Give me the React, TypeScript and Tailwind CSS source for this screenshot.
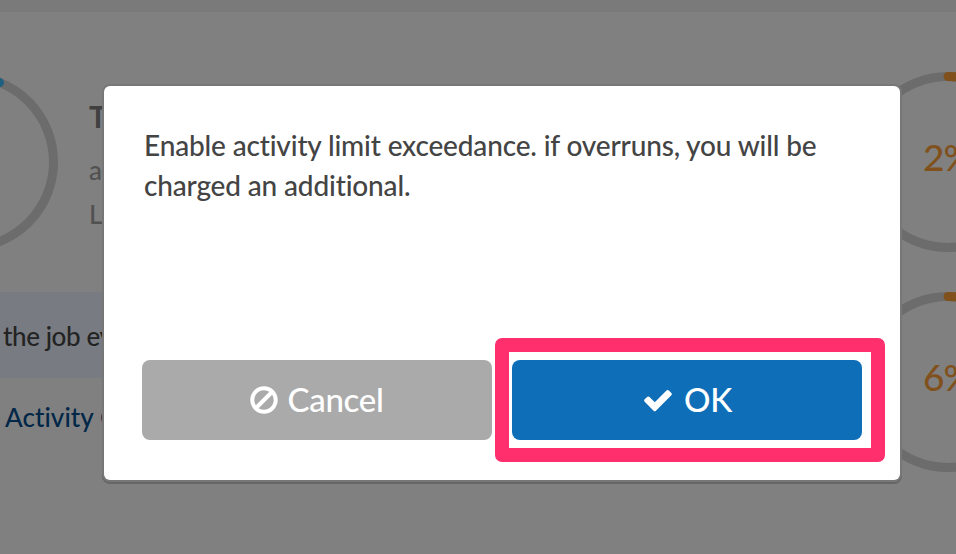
import React from "react";

function Gauge({ color, arc, label }: { color: string; arc: string; label?: string }) {
  return (
    <div className="relative size-[180px] shrink-0">
      <svg className="block size-full" viewBox="0 0 180 180" fill="none" strokeWidth="9">
        <circle cx="90" cy="90" r="85.5" stroke="#6c6c6c" />
        <path d={arc} stroke={color} strokeLinecap="round" />
      </svg>
      {label && (
        <span className="absolute inset-0 flex items-center pb-3 pl-[65px] text-[37px] leading-none font-medium tracking-[-1px] text-[#80511c]">
          {label}
        </span>
      )}
    </div>
  );
}

function BanIcon() {
  return (
    <svg className="size-8" viewBox="0 0 1792 1792" fill="currentColor">
      <path d="M1440 893q0-161-87-295l-754 753q137 89 297 89 111 0 211.500-43.500t173.500-116.500 116-174.500 43-212.500zm-999 299l755-754q-135-91-300-91-148 0-273 73t-198 199-73 274q0 162 89 299zm1223-299q0 157-61 300t-163.500 246-245 164-298.500 61-298.500-61-245-164-163.500-246-61-300 61-299.500 163.500-245.500 245-164 298.500-61 298.500 61 245 164 163.500 245.500 61 299.500z" />
    </svg>
  );
}

function CheckIcon() {
  return (
    <svg className="size-8" viewBox="0 0 1792 1792" fill="currentColor">
      <path d="M1671 566q0 40-28 68l-724 724-136 136q-28 28-68 28t-68-28l-136-136-362-362q-28-28-28-68t28-68l136-136q28-28 68-28t68 28l294 295 656-657q28-28 68-28t68 28l136 136q28 28 28 68z" />
    </svg>
  );
}

function Dashboard() {
  return (
    <div className="h-full bg-[#808080]">
      <div className="h-3 bg-[#7a7a7a]" />
      <div className="flex justify-between">
        <div className="w-[400px] shrink-0">
          <div className="flex h-[280px] pt-[60px]">
            <div className="-ml-[122px]">
              <Gauge color="#1f5f80" arc="M90 4.500A85.500 85.500 0 0 1 121.500 10.500" />
            </div>
            <div className="pt-[22px] pl-[31px] leading-[44px] font-medium text-[#515151]">
              <p className="text-[30px] font-bold text-[#404040]">T</p>
              <p className="mt-[10px] text-[26px]">a</p>
              <p className="text-[26px]">L</p>
            </div>
          </div>
          <div className="flex h-[86px] items-center bg-[#787c82] pt-[3px] pl-[3px] text-[26px] font-medium tracking-[-0.4px] text-[#232323]">
            the job events
          </div>
          <div className="flex h-[78px] items-center pl-[5px] text-[26px] font-medium tracking-[0.08px] text-[#002748] [font-variant-ligatures:none]">
            Activity Count
          </div>
        </div>
        <div className="flex w-[98px] shrink-0 flex-col gap-10 pt-[60px]">
          <Gauge color="#80511c" arc="M90 4.500A85.500 85.500 0 0 1 100.700 5.170" label="2%" />
          <Gauge color="#80511c" arc="M90 4.500A85.500 85.500 0 0 1 121.500 10.500" label="6%" />
        </div>
      </div>
    </div>
  );
}

function Dialog() {
  return (
    <div className="flex h-[394px] w-[796px] flex-col rounded-[6px] bg-white px-[38px] pt-[39px] pb-10 shadow-[0_0_0_2px_#777,0_2px_0_2px_#666]">
      <p className="flex-1 pr-6 pl-[2px] text-[28px] leading-10 font-medium tracking-[-0.16px] text-[#444]">
        Enable activity limit exceedance. if overruns, you will be charged an additional.
      </p>
      <div className="flex gap-5 text-[33px] font-medium tracking-[-0.3px] text-white">
        <button className="flex h-20 w-[350px] items-center justify-center gap-2 rounded-lg bg-[#aaa] pr-[3px]">
          <BanIcon />
          Cancel
        </button>
        <div className="relative">
          <button className="flex h-20 w-[350px] items-center justify-center gap-[10px] rounded-lg bg-[#0e6eb8]">
            <CheckIcon />
            OK
          </button>
          <div className="pointer-events-none absolute -top-[22px] -left-[17px] h-[124px] w-[390px] rounded-[7px] border-[14px] border-[#ff2e6c]" />
        </div>
      </div>
    </div>
  );
}

export default function App() {
  return (
    <div className="relative h-[554px] w-[956px] overflow-hidden font-[Lato,sans-serif]">
      <Dashboard />
      <div className="absolute inset-0 flex items-start pt-[86px] pl-[104px]">
        <Dialog />
      </div>
    </div>
  );
}
